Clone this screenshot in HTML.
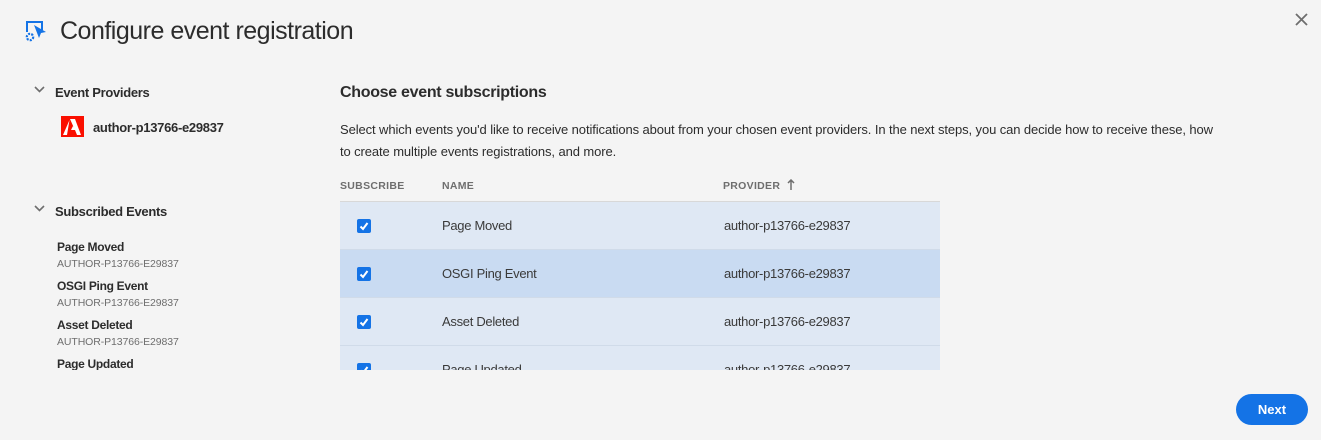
<!DOCTYPE html>
<html><head><meta charset="utf-8"><style>
*{margin:0;padding:0;box-sizing:border-box}
body{width:1321px;height:440px;background:#f4f4f4;font-family:"Liberation Sans",sans-serif;color:#2c2c2c;position:relative;overflow:hidden}
.a{position:absolute;white-space:nowrap}
.t{font-size:25px;color:#2c2c2c;letter-spacing:-0.5px}
.h{font-size:13px;font-weight:bold;letter-spacing:-0.3px}
.sub{font-size:10.5px;color:#6e6e6e;letter-spacing:-0.1px}
.p{font-size:13px;letter-spacing:-0.1px;color:#2c2c2c}
.th{font-size:10.5px;font-weight:bold;color:#6e6e6e;letter-spacing:0.3px}
.row{position:absolute;left:340px;width:600px;height:48px;background:#dfe8f4;border-bottom:1px solid #d0dbe9}
.row .c{position:absolute;left:17px;top:17px;width:14px;height:14px;background:#1473e6;border-radius:2px}
.row .n{position:absolute;left:102px;top:16px;font-size:13px;color:#3a3a3a;letter-spacing:-0.3px;white-space:nowrap}
.row .v{position:absolute;left:384px;top:16px;font-size:13px;color:#3a3a3a;letter-spacing:-0.3px;white-space:nowrap}
.it{font-size:12px;font-weight:bold;letter-spacing:-0.3px;height:16px;line-height:16px}
.sub{height:14px;line-height:14px}
</style></head><body>
<svg class="a" style="left:24px;top:20px" width="24" height="22" viewBox="0 0 24 22">
<path d="M2 1h17v9h-2V3H4v9H2z" fill="#1473e6"/>
<path d="M10 5l12 7-5 1-2 5z" fill="#1473e6"/>
<circle cx="6" cy="17" r="3.2" fill="none" stroke="#1473e6" stroke-width="2.2" stroke-dasharray="2 1.2"/>
</svg>
<div class="a t" style="left:60px;top:17px">Configure event registration</div>
<svg class="a" style="left:1295px;top:13px" width="13" height="13" viewBox="0 0 13 13"><path d="M1 1l11 11M12 1L1 12" stroke="#6e6e6e" stroke-width="1.8"/></svg>

<svg class="a" style="left:34px;top:86px" width="11" height="8" viewBox="0 0 11 8"><path d="M1 1l4.5 4.5L10 1" stroke="#6e6e6e" stroke-width="1.6" fill="none"/></svg>
<div class="a h" style="left:55px;top:85px">Event Providers</div>
<svg class="a" style="left:61px;top:116px" width="23" height="21" viewBox="0 0 23 21"><rect width="23" height="21" fill="#fa0f00"/><path d="M9 3h5l6 16h-4l-2-5h-4l2-4 1 2-4-9zM8.5 4L2 19h4z" fill="#fff"/></svg>
<div class="a h" style="left:93px;top:120px">author-p13766-e29837</div>

<svg class="a" style="left:34px;top:205px" width="11" height="8" viewBox="0 0 11 8"><path d="M1 1l4.5 4.5L10 1" stroke="#6e6e6e" stroke-width="1.6" fill="none"/></svg>
<div class="a h" style="left:55px;top:204px">Subscribed Events</div>
<div class="a" style="left:57px;top:239px;height:131px;overflow:hidden;width:250px">
<div class="it">Page Moved</div><div class="sub" style="margin-top:2px">AUTHOR-P13766-E29837</div>
<div class="it" style="margin-top:7px">OSGI Ping Event</div><div class="sub" style="margin-top:2px">AUTHOR-P13766-E29837</div>
<div class="it" style="margin-top:7px">Asset Deleted</div><div class="sub" style="margin-top:2px">AUTHOR-P13766-E29837</div>
<div class="it" style="margin-top:7px">Page Updated</div>
</div>

<div class="a" style="left:340px;top:84px;font-size:16px;font-weight:bold;letter-spacing:-0.3px">Choose event subscriptions</div>
<div class="a p" style="left:340px;top:122px">Select which events you'd like to receive notifications about from your chosen event providers. In the next steps, you can decide how to receive these, how</div>
<div class="a p" style="left:340px;top:144px">to create multiple events registrations, and more.</div>

<div class="a th" style="left:340px;top:180px">SUBSCRIBE</div>
<div class="a th" style="left:442px;top:180px">NAME</div>
<div class="a th" style="left:723px;top:180px">PROVIDER</div>
<svg class="a" style="left:787px;top:179px" width="8" height="11" viewBox="0 0 8 11"><path d="M4 11V1M1 4l3-3 3 3" stroke="#6e6e6e" stroke-width="1.5" fill="none"/></svg>
<div class="a" style="left:340px;top:201px;width:600px;height:1px;background:#d8d8d8"></div>

<div class="a" style="left:340px;top:202px;width:600px;height:168px;overflow:hidden">
<div class="row" style="left:0;top:0"><div class="c"><svg width="14" height="14" viewBox="0 0 14 14"><path d="M3.5 7.5l2.5 2.5 4.5-6" stroke="#fff" stroke-width="2" fill="none"/></svg></div><div class="n">Page Moved</div><div class="v">author-p13766-e29837</div></div>
<div class="row" style="left:0;top:48px;background:#c9dbf2"><div class="c"><svg width="14" height="14" viewBox="0 0 14 14"><path d="M3.5 7.5l2.5 2.5 4.5-6" stroke="#fff" stroke-width="2" fill="none"/></svg></div><div class="n">OSGI Ping Event</div><div class="v">author-p13766-e29837</div></div>
<div class="row" style="left:0;top:96px"><div class="c"><svg width="14" height="14" viewBox="0 0 14 14"><path d="M3.5 7.5l2.5 2.5 4.5-6" stroke="#fff" stroke-width="2" fill="none"/></svg></div><div class="n">Asset Deleted</div><div class="v">author-p13766-e29837</div></div>
<div class="row" style="left:0;top:144px"><div class="c"><svg width="14" height="14" viewBox="0 0 14 14"><path d="M3.5 7.5l2.5 2.5 4.5-6" stroke="#fff" stroke-width="2" fill="none"/></svg></div><div class="n">Page Updated</div><div class="v">author-p13766-e29837</div></div>
</div>

<div class="a" style="left:1236px;top:394px;width:72px;height:31px;border-radius:16px;background:#1473e6;color:#fff;font-size:13px;font-weight:bold;text-align:center;line-height:31px">Next</div>
</body></html>
